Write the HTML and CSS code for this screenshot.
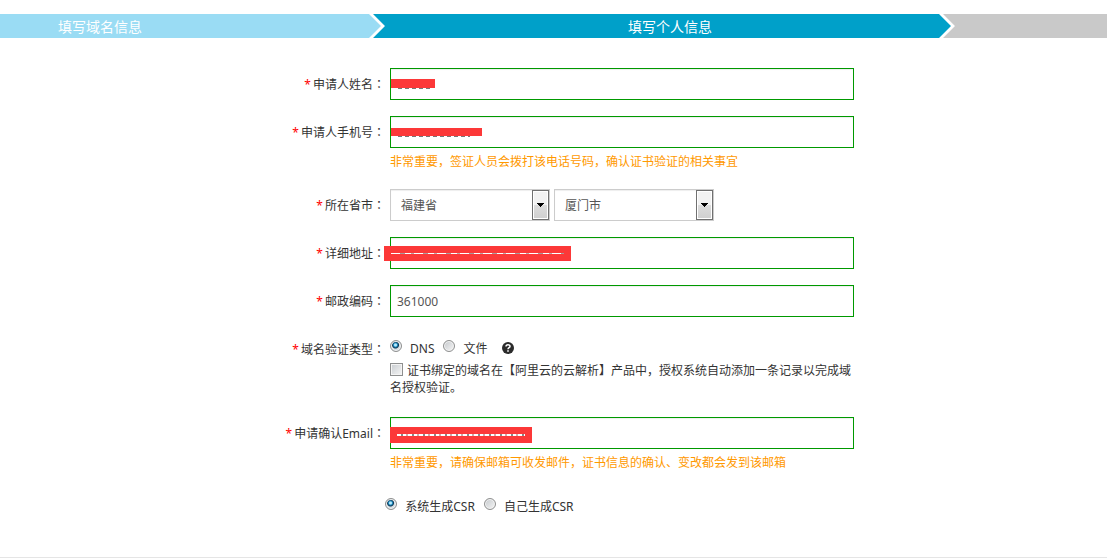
FILE: index.html
```html
<!DOCTYPE html>
<html lang="zh-CN">
<head>
<meta charset="utf-8">
<title>填写个人信息</title>
<link rel="stylesheet" href="styles.css">
</head>
<body>
<ol class="steps">
  <li class="step step-done">填写域名信息</li>
  <li class="step step-current">填写个人信息</li>
  <li class="step step-next"></li>
</ol>
<form class="form">
  <div class="row">
    <label class="label" for="name"><span class="star">*</span>申请人姓名<span class="colon" lang="zh-TW">：</span></label>
    <div class="field"><div class="box"><input class="text" id="name" type="text"><span class="mask mask-name"></span></div></div>
  </div>
  <div class="row">
    <label class="label" for="phone"><span class="star">*</span>申请人手机号<span class="colon" lang="zh-TW">：</span></label>
    <div class="field"><div class="box"><input class="text" id="phone" type="tel"><span class="mask mask-phone"></span></div>
      <p class="hint">非常重要，签证人员会拨打该电话号码，确认证书验证的相关事宜</p></div>
  </div>
  <div class="row">
    <label class="label" for="province"><span class="star">*</span>所在省市<span class="colon" lang="zh-TW">：</span></label>
    <div class="field selects">
      <span class="drop"><select class="select" id="province"><option>福建省</option></select><svg class="arrow" viewBox="0 0 15 28" aria-hidden="true"><path d="M4 12h7v1h-1v1H9v1H8v1H7v-1H6v-1H5v-1H4z"/></svg></span>
      <span class="drop"><select class="select" id="city" aria-label="市"><option>厦门市</option></select><svg class="arrow" viewBox="0 0 15 28" aria-hidden="true"><path d="M4 12h7v1h-1v1H9v1H8v1H7v-1H6v-1H5v-1H4z"/></svg></span>
    </div>
  </div>
  <div class="row">
    <label class="label" for="address"><span class="star">*</span>详细地址<span class="colon" lang="zh-TW">：</span></label>
    <div class="field"><div class="box"><input class="text" id="address" type="text"><span class="mask mask-address"></span></div></div>
  </div>
  <div class="row">
    <label class="label" for="zip"><span class="star">*</span>邮政编码<span class="colon" lang="zh-TW">：</span></label>
    <div class="field"><div class="box"><input class="text" id="zip" type="text" value="361000"></div></div>
  </div>
  <div class="row">
    <span class="label" id="verify-label"><span class="star">*</span>域名验证类型<span class="colon" lang="zh-TW">：</span></span>
    <div class="field verify">
      <div class="options" role="radiogroup" aria-labelledby="verify-label">
        <label class="option"><input class="radio" type="radio" name="verify" checked><span>DNS</span></label>
        <label class="option"><input class="radio" type="radio" name="verify"><span>文件</span></label>
        <svg class="help" viewBox="0 0 12 12" aria-hidden="true"><circle cx="6" cy="6" r="6" fill="#2b2b2b"/><path d="M4 4.6C4 2.2 8 2.2 8 4.5C8 5.7 6 5.8 6 7.3" fill="none" stroke="#fff" stroke-width="1.5"/><path d="M5.2 8.2h1.6v1.5H5.2z" fill="#fff"/></svg>
      </div>
      <label class="agree"><input class="check" type="checkbox">证书绑定的域名在【阿里云的云解析】产品中，授权系统自动添加一条记录以完成域名授权验证。</label>
    </div>
  </div>
  <div class="row">
    <label class="label" for="email"><span class="star">*</span>申请确认Email<span class="colon" lang="zh-TW">：</span></label>
    <div class="field"><div class="box"><input class="text" id="email" type="email"><span class="mask mask-email"></span></div>
      <p class="hint">非常重要，请确保邮箱可收发邮件，证书信息的确认、变改都会发到该邮箱</p></div>
  </div>
  <div class="row csr">
    <div class="options" role="radiogroup" aria-label="CSR">
      <label class="option"><input class="radio" type="radio" name="csr" checked><span>系统生成CSR</span></label>
      <label class="option"><input class="radio" type="radio" name="csr"><span>自己生成CSR</span></label>
    </div>
  </div>
</form>
</body>
</html>
```

FILE: styles.css
```css
* {
  box-sizing: border-box;
}

body {
  margin: 0;
  background: #fff;
  color: #333;
  font: 12px/17px "Noto Sans", "Noto Sans CJK SC", sans-serif;
}

.steps {
  display: grid;
  grid-template-columns: 385fr 570fr 152fr;
  margin: 0;
  padding: 14px 0 0;
  list-style: none;
}

.step {
  height: 24px;
  color: #fff;
  font-size: 14px;
  line-height: 25px;
}

.step-done {
  padding-left: 58px;
  background: #9adcf4;
  clip-path: polygon(0 0, calc(100% - 16px) 0, calc(100% - 4px) 50%, calc(100% - 16px) 100%, 0 100%);
}

.step-current {
  margin-left: -12px;
  padding-left: 12px;
  background: #00a0c9;
  text-align: center;
  clip-path: polygon(0 0, calc(100% - 16px) 0, calc(100% - 4px) 50%, calc(100% - 16px) 100%, 0 100%, 12px 50%);
}

.step-next {
  margin-left: -12px;
  background: #c9c9c9;
  clip-path: polygon(0 0, 100% 0, 100% 100%, 0 100%, 12px 50%);
}

.form {
  display: flex;
  flex-direction: column;
  gap: 16px;
  padding: 30px 0 36px;
  border-bottom: 1px solid #e5e5e5;
}

.row {
  display: grid;
  grid-template-columns: 385fr 717fr;
  column-gap: 5px;
}

.label {
  height: 32px;
  line-height: 32px;
  text-align: right;
}

.star {
  margin-right: 2px;
  color: #f00;
}

.colon {
  font-family: "Noto Sans CJK TC", sans-serif;
}

.field {
  max-width: 464px;
}

.box {
  position: relative;
}

.text {
  display: block;
  width: 100%;
  height: 32px;
  padding: 0 6px;
  border: 1px solid #090;
  background: #fff;
  box-shadow: inset 0 1px 1px #eee;
  color: #555;
  font: inherit;
}

.hint {
  margin: 0;
  padding: 5px 0 3px;
  color: #f90;
}

.mask {
  position: absolute;
  background: #fc3838;
}

.mask-name {
  top: 11px;
  left: 1px;
  width: 44px;
  height: 9px;
}

.mask-phone {
  top: 12px;
  left: 1px;
  width: 91px;
  height: 8px;
}

.mask-name::after,
.mask-phone::after {
  content: "";
  position: absolute;
  top: 100%;
  left: 7px;
  right: 5px;
  height: 1px;
  background: repeating-linear-gradient(90deg, #777 0 4px, #fff 4px 7px);
}

.mask-phone::after {
  right: 12px;
}

.mask-address {
  top: 9px;
  left: -6px;
  width: 187px;
  height: 15px;
}

.mask-address::after {
  content: "";
  position: absolute;
  top: 7px;
  left: 7px;
  right: 7px;
  height: 1px;
  background: repeating-linear-gradient(90deg, #fff 0 9px, #a99 9px 14px, #fff 14px 20px, #baa 20px 23px);
}

.mask-email {
  top: 10px;
  left: 0;
  width: 142px;
  height: 16px;
}

.mask-email::after {
  content: "";
  position: absolute;
  top: 7px;
  left: 7px;
  right: 7px;
  height: 2px;
  background: repeating-linear-gradient(90deg, #fff 0 4px, #888 4px 6px, #fff 6px 9px, #caa 9px 11px);
}

.selects {
  display: flex;
  gap: 4px;
}

.drop {
  position: relative;
  width: 160px;
}

.select {
  appearance: none;
  display: block;
  width: 100%;
  height: 32px;
  padding: 0 20px 0 10px;
  border: 1px solid #ccc;
  border-radius: 0;
  background: #fff;
  box-shadow: inset 0 1px 1px #eee;
  color: #555;
  font: inherit;
}

.arrow {
  position: absolute;
  top: 1px;
  right: 1px;
  width: 17px;
  height: 30px;
  border: 1px solid #707070;
  background: linear-gradient(#f2f2f2 0 50%, #ddd 50%, #cfcfcf);
  box-shadow: inset 0 0 0 1px #fff;
  pointer-events: none;
}

.verify {
  padding-bottom: 5px;
}

.options {
  display: flex;
  align-items: center;
  height: 29px;
}

.option {
  display: flex;
  gap: 8px;
  margin-right: 9px;
  line-height: 17px;
}

.option span {
  padding-top: 2px;
}

.radio {
  appearance: none;
  flex: none;
  width: 12px;
  height: 12px;
  margin: 2px 0 0;
  border: 1px solid #8e8f8f;
  border-radius: 50%;
  background: linear-gradient(135deg, #c4c8cc, #f6f6f6);
  box-shadow: inset 0 0 0 1px #f4f4f4;
}

.radio:checked {
  background: radial-gradient(circle at 45% 40%, #b7e9fb 0 1px, #1b8ac0 2px, #0c3450 3px, #d5dde2 4px);
}

.help {
  width: 12px;
  height: 12px;
  margin-left: 6px;
}

.agree {
  display: block;
}

.check {
  appearance: none;
  width: 13px;
  height: 13px;
  margin: 0 4px 0 0;
  border: 1px solid #8e8f8f;
  background: linear-gradient(135deg, #c8ccd0, #f6f6f6);
  box-shadow: inset 0 0 0 1px #f4f4f4;
  vertical-align: -1px;
}

.csr {
  grid-template-columns: 1fr;
  padding-left: 34.8%;
}

.csr .options {
  height: 31px;
}
```
